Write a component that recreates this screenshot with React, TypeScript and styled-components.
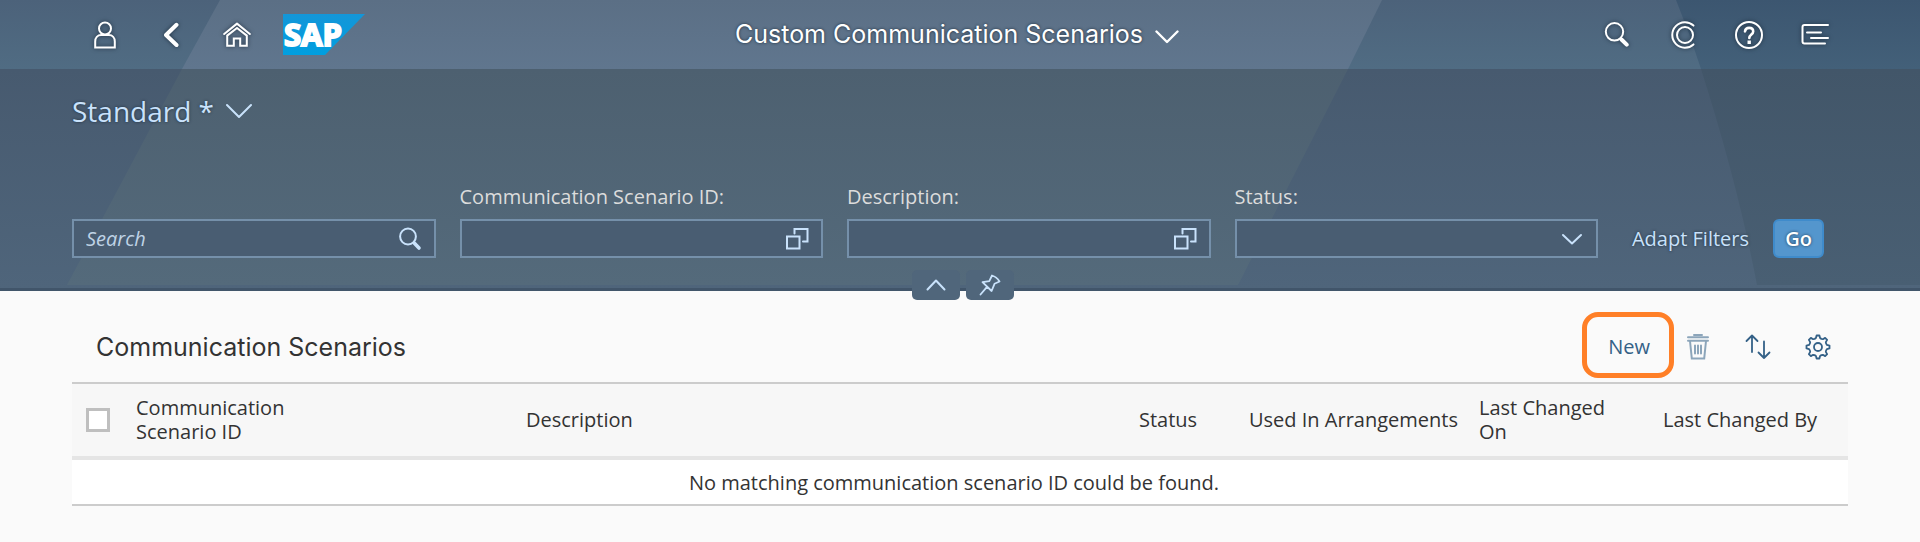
import React from 'react';
import styled, { createGlobalStyle, css } from 'styled-components';

const bodyFont = '"Open Sans", "Noto Sans", sans-serif';
const titleFont = 'Inter, "Open Sans", sans-serif';

const GlobalStyle = createGlobalStyle`
  *, *::before, *::after { box-sizing: border-box; }
  body {
    margin: 0;
    background: #fafafa;
    color: #333;
    font-family: ${bodyFont};
    font-size: 20px;
    line-height: 24px;
  }
  button, input, select { font: inherit; color: inherit; }
  button { padding: 0; border: 0; background: none; cursor: pointer; }
`;

const Band = styled.div`
  position: relative;
  isolation: isolate;
`;

const Backdrop = styled.svg`
  position: absolute;
  inset: 0;
  z-index: -1;
  width: 100%;
  height: 100%;
`;

const Shell = styled(Band).attrs({ as: 'header' })`
  display: grid;
  grid-template-columns: 1fr auto 1fr;
  align-items: center;
  min-height: 69px;
  padding: 0 72px;
  color: #fff;
`;

const ShellGroup = styled.div<{ $end?: boolean }>`
  display: flex;
  align-items: center;
  justify-content: ${p => (p.$end ? 'flex-end' : 'flex-start')};
`;

const ShellButton = styled.button`
  display: flex;
  align-items: center;
  justify-content: center;
  width: 66px;
  height: 60px;
  filter: drop-shadow(0 0 2px rgba(20, 35, 50, 0.8));
`;

const LogoLink = styled.a`
  display: flex;
  margin-left: 13px;
`;

const Logo = styled.svg`
  overflow: visible;
`;

const ShellTitle = styled.button`
  display: flex;
  align-items: center;
  gap: 12px;
  padding: 0 6px 2px 0;
  font-family: ${titleFont};
  font-size: 25px;
  line-height: 32px;
  text-shadow: 0 0 3px rgba(20, 35, 50, 0.9);

  svg { margin-top: 6px; }
`;

const FilterBar = styled(Band).attrs({ as: 'section' })`
  display: flex;
  flex-direction: column;
  padding: 22px 72px 30px;
  border-bottom: 3px solid #41556a;
`;

const VariantButton = styled.button`
  display: flex;
  align-items: center;
  align-self: flex-start;
  gap: 12px;
  margin-bottom: 54px;
  color: #c9e2fb;
  font-size: 28px;
  line-height: 40px;
  text-shadow: 0 0 3px rgba(20, 35, 50, 0.8);
`;

const FilterGrid = styled.form`
  display: grid;
  grid-template-columns: repeat(4, minmax(0, 1fr)) 226px;
  gap: 24px;
  align-items: end;
`;

const Field = styled.div`
  display: flex;
  flex-direction: column;
  gap: 10px;
`;

const FieldLabel = styled.label`
  color: #dcdcdc;
`;

const FieldBox = styled.div`
  display: flex;
  align-items: center;
  height: 39px;
  padding-right: 12px;
  border: 2px solid #7590aa;
  background: #495d72;
  color: #c9e2fb;
`;

const control = css`
  flex: 1;
  min-width: 0;
  height: 100%;
  padding: 0 12px;
  border: 0;
  outline: 0;
  background: transparent;
`;

const TextInput = styled.input`
  ${control}
  &::placeholder {
    color: #bfd3e6;
    font-style: italic;
    opacity: 1;
  }
`;

const StatusSelect = styled.select`
  ${control}
  appearance: none;
`;

const FieldButton = styled.button`
  display: flex;
`;

const FilterActions = styled.div`
  display: flex;
  align-items: center;
  justify-content: flex-end;
  gap: 24px;
  padding-right: 24px;
`;

const AdaptButton = styled.button`
  height: 39px;
  color: #c9e2fb;
  text-shadow: 0 0 3px rgba(20, 35, 50, 0.8);
`;

const GoButton = styled.button`
  width: 51px;
  height: 39px;
  border: 2px solid #3f8bcb;
  border-radius: 6px;
  background: #5496cd;
  color: #fff;
  font-weight: 600;
  text-shadow: 0 0 3px rgba(20, 35, 50, 0.8);
`;

const Handles = styled.div`
  position: absolute;
  right: 0;
  bottom: -12px;
  left: 0;
  display: flex;
  justify-content: center;
`;

const HandleButton = styled.button`
  display: flex;
  align-items: center;
  justify-content: center;
  width: 48px;
  height: 30px;
  margin-left: 6px;
  border-radius: 5px;
  background: #50667b;
  color: #c9e2fb;
`;

const Content = styled.main`
  padding: 20px 72px 36px;
`;

const Toolbar = styled.div`
  display: flex;
  align-items: center;
  gap: 12px;
  min-height: 71px;
  padding: 0 6px 0 24px;
  color: #346187;
`;

const TableTitle = styled.h2`
  flex: 1;
  margin: 0;
  color: #333;
  font-family: ${titleFont};
  font-size: 25px;
  font-weight: 400;
  line-height: 32px;
`;

const NewButton = styled.button`
  position: relative;
  height: 48px;
  padding: 0 12px;
`;

const Highlight = styled.span`
  position: absolute;
  inset: -11px -12px -7px -14px;
  border: 5px solid #ff7f27;
  border-radius: 16px;
  pointer-events: none;
`;

const ToolButton = styled.button`
  display: flex;
  align-items: center;
  justify-content: center;
  width: 48px;
  height: 48px;

  &:disabled { opacity: 0.55; }
`;

const Table = styled.table`
  width: 100%;
  table-layout: fixed;
  border-collapse: separate;
  border-spacing: 0;
  border-top: 2px solid #ccc;
  border-bottom: 2px solid #ccc;
`;

const Column = styled.col<{ $width?: number }>`
  width: ${p => (p.$width ? p.$width + 'px' : 'auto')};
`;

const HeadCell = styled.th`
  height: 76px;
  padding: 12px;
  border-bottom: 4px solid #e5e5e5;
  background: #f7f7f7;
  font-weight: 400;
  text-align: left;
  white-space: nowrap;
`;

const EmptyCell = styled.td`
  height: 44px;
  padding: 2px 24px 0 12px;
  background: #fff;
  text-align: center;
`;

const Checkbox = styled.input`
  display: block;
  width: 24px;
  height: 24px;
  margin: 0 2px;
  appearance: none;
  border: 3px solid #bfbfbf;
  background: #fff;
`;

type IconProps = { w?: number; h?: number; sw?: number; children: React.ReactNode };
const Icon = ({ w = 28, h = 28, sw = 2, children }: IconProps) => (
  <svg width={w} height={h} viewBox={`0 0 ${w} ${h}`} fill="none" stroke="currentColor" strokeWidth={sw}
    strokeLinecap="round" strokeLinejoin="round" aria-hidden="true">{children}</svg>
);

const UserIcon = () => (
  <Icon><circle cx="14" cy="7.5" r="6" /><path strokeLinejoin="miter" d="M4.2 26.5V20.5c0-3.8 2.3-6.5 6-6.5h7.6c3.7 0 6 2.7 6 6.5v6z" /></Icon>
);
const BackIcon = () => <Icon sw={4}><path d="M19.5 3.8 9 14 19.5 24" /></Icon>;
const HomeIcon = () => (
  <Icon><path d="M1.2 13 14 2.6 26.8 13" /><path strokeLinejoin="miter" d="M4.2 14.6V24.8h6.6V17.6h6.4v7.2h6.6V14.6L14 7z" /></Icon>
);
const ShellSearchIcon = () => (
  <Icon><circle cx="11.5" cy="10.8" r="8.7" /><path strokeWidth="4" d="m18.5 18.5 5.2 5.2" /></Icon>
);
const CopilotIcon = () => (
  <Icon><circle cx="16" cy="14" r="8" /><path d="M24.5 4.6A12.7 12.7 0 1 0 24.5 23.4" /></Icon>
);
const HelpIcon = () => (
  <Icon>
    <circle cx="14" cy="14" r="13" />
    <path strokeWidth="2.6" d="M10 10.4c.3-2.3 1.8-3.5 4.1-3.5 2.4 0 4.1 1.4 4.1 3.5 0 2.9-3.9 3.3-3.9 6.6" />
    <path strokeWidth="3.4" strokeLinecap="square" d="M14.2 21.2v.1" />
  </Icon>
);
const FeedIcon = () => (
  <Icon><path d="M27 4H3.5Q1.5 4 1.5 6V20.5Q1.5 22.5 3.5 22.5H24M6 11.5H20M10 17H27" /></Icon>
);
const TitleChevron = () => <Icon w={24} h={14} sw={2.4}><path d="M1.5 1.5 12 12 22.5 1.5" /></Icon>;
const VariantChevron = () => <Icon w={26} h={16} sw={2}><path d="M1 2 13 14 25 2" /></Icon>;
const FieldSearchIcon = () => (
  <Icon w={24} h={24}><circle cx="10" cy="9.5" r="7.9" /><path strokeWidth="3.6" d="m16.2 16 4.8 5" /></Icon>
);
const ValueHelpIcon = () => (
  <Icon w={24} h={24}><path strokeLinejoin="miter" d="M2 9.5H14.5V21.5H2zM9.5 6.5V2H22.5V14.5H18" /></Icon>
);
const SelectChevron = () => <Icon w={24} h={14}><path d="M3 3 12 11.5 21 3" /></Icon>;
const CollapseIcon = () => <Icon w={20} h={12}><path d="M1.5 10.5 10 1.5 18.5 10.5" /></Icon>;
const PinIcon = () => (
  <Icon w={22} h={22} sw={1.8}>
    <path d="M13 1.5Q17.5 2.8 20.5 7.5L15.5 9.8 12.6 17 3.5 8.2 10.3 7.2zM8 12.8 1.5 20.5" />
  </Icon>
);
const TrashIcon = () => (
  <Icon w={24} h={28}>
    <path d="M8 2H16M2 4.2H22M2 7.8H22" />
    <path strokeLinejoin="miter" d="M4 8 5.8 25.5H18.2L20 8M9 12.5V20.5M12 12.5V20.5M15 12.5V20.5" />
  </Icon>
);
const SortIcon = () => (
  <Icon w={26} h={26} sw={1.8}><path d="M7 18V1.5M1.5 7 7 1.5 12.5 7M19 7.5V24M13.5 18.5 19 24 24.5 18.5" /></Icon>
);

const toothPoints = [[-7, 11.6], [7, 11.6], [13, 9.2], [22.5, 8.8], [32, 9.2]];
const gearOutline = Array.from({ length: 8 }, (_, i) =>
  toothPoints.map(([angle, radius]) => {
    const t = ((i * 45 + angle) * Math.PI) / 180;
    return `${(13 + radius * Math.cos(t)).toFixed(2)} ${(13 + radius * Math.sin(t)).toFixed(2)}`;
  }).join('L'),
).join('L');
const GearIcon = () => <Icon w={26} h={26} sw={1.8}><path d={`M${gearOutline}Z`} /><circle cx="13" cy="13" r="4" /></Icon>;

const SapLogo = () => (
  <Logo width="82" height="41" viewBox="0 0 82 41" role="img" aria-label="SAP">
    <defs>
      <linearGradient id="sap" x1="0" y1="0" x2="0" y2="1">
        <stop offset="0" stopColor="#1496d8" /><stop offset="1" stopColor="#009fe0" />
      </linearGradient>
    </defs>
    <path fill="url(#sap)" d="M0 0H82L42 41H0z" />
    <text x="1" y="32" fill="#fff" stroke="#fff" strokeWidth="2" fontFamily="Open Sans" fontSize="31" fontWeight="700">SAP</text>
  </Logo>
);

type Tone = [string, string];
const Fade = ({ id, tone }: { id: string; tone: Tone }) => (
  <linearGradient id={id} x1="0" y1="0" x2="0" y2="1">
    <stop offset="0" stopColor={tone[0]} /><stop offset="1" stopColor={tone[1]} />
  </linearGradient>
);

const ShellBackdrop = () => (
  <Backdrop viewBox="0 0 1920 69" preserveAspectRatio="none" aria-hidden="true">
    <defs>
      <Fade id="shell-base" tone={['#4c627a', '#506c83']} />
      <Fade id="shell-light" tone={['#5b6f85', '#60768e']} />
      <Fade id="shell-dark" tone={['#3c5670', '#436079']} />
    </defs>
    <path fill="url(#shell-base)" d="M0 0H1920V69H0z" />
    <path fill="url(#shell-light)" d="M220 0H1382L1348 69H182z" />
    <path fill="url(#shell-dark)" d="M1676 0H1920V69H1701Q1690 34 1676 0z" />
  </Backdrop>
);

const FilterBackdrop = () => (
  <Backdrop viewBox="0 0 1920 219" preserveAspectRatio="none" aria-hidden="true">
    <defs>
      <Fade id="filter-base" tone={['#475a6f', '#4f657b']} />
      <Fade id="filter-light" tone={['#4d6070', '#546a7b']} />
      <Fade id="filter-dark" tone={['#425669', '#495f73']} />
    </defs>
    <path fill="url(#filter-base)" d="M0 0H1920V219H0z" />
    <path fill="url(#filter-light)" d="M182 0H1348L1238 216H67z" />
    <path fill="url(#filter-dark)" d="M1701 0H1920V216H1757Q1738 116 1701 0z" />
  </Backdrop>
);

export default function App() {
  return (
    <>
      <GlobalStyle />
      <Shell>
        <ShellBackdrop />
        <ShellGroup>
          <ShellButton aria-label="User"><UserIcon /></ShellButton>
          <ShellButton aria-label="Back"><BackIcon /></ShellButton>
          <ShellButton aria-label="Home"><HomeIcon /></ShellButton>
          <LogoLink href="#" aria-label="SAP"><SapLogo /></LogoLink>
        </ShellGroup>
        <ShellTitle>Custom Communication Scenarios<TitleChevron /></ShellTitle>
        <ShellGroup $end>
          <ShellButton aria-label="Search"><ShellSearchIcon /></ShellButton>
          <ShellButton aria-label="CoPilot"><CopilotIcon /></ShellButton>
          <ShellButton aria-label="Help"><HelpIcon /></ShellButton>
          <ShellButton aria-label="Notifications"><FeedIcon /></ShellButton>
        </ShellGroup>
      </Shell>

      <FilterBar>
        <FilterBackdrop />
        <VariantButton>Standard *<VariantChevron /></VariantButton>
        <FilterGrid onSubmit={e => e.preventDefault()}>
          <Field>
            <FieldBox>
              <TextInput type="text" placeholder="Search" aria-label="Search" />
              <FieldButton type="button" aria-label="Run search"><FieldSearchIcon /></FieldButton>
            </FieldBox>
          </Field>
          <Field>
            <FieldLabel htmlFor="scenario-id">Communication Scenario ID:</FieldLabel>
            <FieldBox>
              <TextInput id="scenario-id" type="text" />
              <FieldButton type="button" aria-label="Choose scenario ID"><ValueHelpIcon /></FieldButton>
            </FieldBox>
          </Field>
          <Field>
            <FieldLabel htmlFor="description">Description:</FieldLabel>
            <FieldBox>
              <TextInput id="description" type="text" />
              <FieldButton type="button" aria-label="Choose description"><ValueHelpIcon /></FieldButton>
            </FieldBox>
          </Field>
          <Field>
            <FieldLabel htmlFor="status">Status:</FieldLabel>
            <FieldBox>
              <StatusSelect id="status"><option value="" /></StatusSelect>
              <SelectChevron />
            </FieldBox>
          </Field>
          <FilterActions>
            <AdaptButton type="button">Adapt Filters</AdaptButton>
            <GoButton type="submit">Go</GoButton>
          </FilterActions>
        </FilterGrid>
        <Handles>
          <HandleButton aria-label="Collapse header"><CollapseIcon /></HandleButton>
          <HandleButton aria-label="Pin header"><PinIcon /></HandleButton>
        </Handles>
      </FilterBar>

      <Content>
        <Toolbar>
          <TableTitle>Communication Scenarios</TableTitle>
          <NewButton>New<Highlight /></NewButton>
          <ToolButton disabled aria-label="Delete"><TrashIcon /></ToolButton>
          <ToolButton aria-label="Sort"><SortIcon /></ToolButton>
          <ToolButton aria-label="Settings"><GearIcon /></ToolButton>
        </Toolbar>
        <Table>
          <colgroup>
            <Column $width={52} />
            <Column $width={390} />
            <Column />
            <Column $width={110} />
            <Column $width={230} />
            <Column $width={184} />
            <Column $width={197} />
          </colgroup>
          <thead>
            <tr>
              <HeadCell><Checkbox type="checkbox" aria-label="Select all" /></HeadCell>
              <HeadCell>Communication<br />Scenario ID</HeadCell>
              <HeadCell>Description</HeadCell>
              <HeadCell>Status</HeadCell>
              <HeadCell>Used In Arrangements</HeadCell>
              <HeadCell>Last Changed<br />On</HeadCell>
              <HeadCell>Last Changed By</HeadCell>
            </tr>
          </thead>
          <tbody>
            <tr><EmptyCell colSpan={7}>No matching communication scenario ID could be found.</EmptyCell></tr>
          </tbody>
        </Table>
      </Content>
    </>
  );
}
